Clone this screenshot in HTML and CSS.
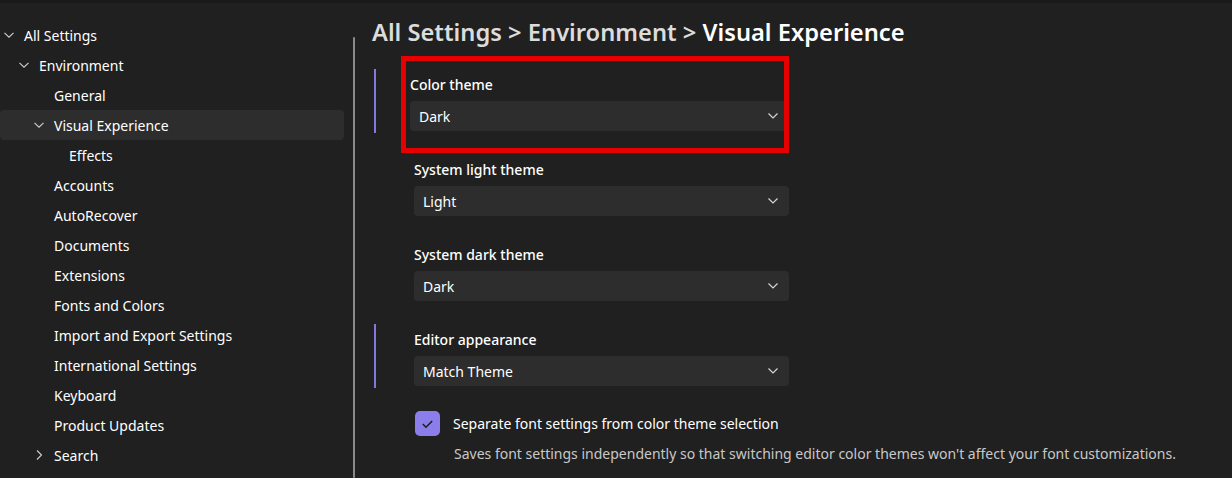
FILE: index.html
```html
<!DOCTYPE html>
<html lang="en">
<head>
  <meta charset="UTF-8">
  <meta name="viewport" content="width=device-width, initial-scale=1.0">
  <title>Options - Visual Experience</title>
  <link rel="stylesheet" href="styles.css">
</head>
<body>
  <div class="app">
    <nav class="tree">
      <div class="tree-row level-0">
        <span class="twisty"><svg viewBox="0 0 10 10"><path d="M0.5 2.8 L5 7.2 L9.5 2.8"/></svg></span>
        <span>All Settings</span>
      </div>
      <div class="tree-row level-1">
        <span class="twisty"><svg viewBox="0 0 10 10"><path d="M0.5 2.8 L5 7.2 L9.5 2.8"/></svg></span>
        <span>Environment</span>
      </div>
      <div class="tree-row level-2"><span class="twisty"></span><span>General</span></div>
      <div class="tree-row level-2 selected">
        <span class="twisty"><svg viewBox="0 0 10 10"><path d="M0.5 2.8 L5 7.2 L9.5 2.8"/></svg></span>
        <span>Visual Experience</span>
      </div>
      <div class="tree-row level-3"><span class="twisty"></span><span>Effects</span></div>
      <div class="tree-row level-2"><span class="twisty"></span><span>Accounts</span></div>
      <div class="tree-row level-2"><span class="twisty"></span><span>AutoRecover</span></div>
      <div class="tree-row level-2"><span class="twisty"></span><span>Documents</span></div>
      <div class="tree-row level-2"><span class="twisty"></span><span>Extensions</span></div>
      <div class="tree-row level-2"><span class="twisty"></span><span>Fonts and Colors</span></div>
      <div class="tree-row level-2"><span class="twisty"></span><span>Import and Export Settings</span></div>
      <div class="tree-row level-2"><span class="twisty"></span><span>International Settings</span></div>
      <div class="tree-row level-2"><span class="twisty"></span><span>Keyboard</span></div>
      <div class="tree-row level-2"><span class="twisty"></span><span>Product Updates</span></div>
      <div class="tree-row level-2">
        <span class="twisty"><svg viewBox="0 0 10 10"><path d="M3 0.5 L7.5 5 L3 9.5"/></svg></span>
        <span>Search</span>
      </div>
    </nav>
    <div class="scroll-thumb"></div>

    <main class="content">
      <h1 class="crumbs">
        <span class="crumb">All Settings</span> &gt; <span class="crumb">Environment</span> &gt; <span class="current">Visual Experience</span>
      </h1>

      <section class="setting accent callout-target">
        <div class="callout"></div>
        <label class="setting-label">Color theme</label>
        <div class="select"><span>Dark</span><svg viewBox="0 0 10 6"><path d="M0.5 0.5 L5 5 L9.5 0.5"/></svg></div>
      </section>

      <section class="setting">
        <label class="setting-label">System light theme</label>
        <div class="select"><span>Light</span><svg viewBox="0 0 10 6"><path d="M0.5 0.5 L5 5 L9.5 0.5"/></svg></div>
      </section>

      <section class="setting">
        <label class="setting-label">System dark theme</label>
        <div class="select"><span>Dark</span><svg viewBox="0 0 10 6"><path d="M0.5 0.5 L5 5 L9.5 0.5"/></svg></div>
      </section>

      <section class="setting accent">
        <label class="setting-label">Editor appearance</label>
        <div class="select"><span>Match Theme</span><svg viewBox="0 0 10 6"><path d="M0.5 0.5 L5 5 L9.5 0.5"/></svg></div>
      </section>

      <div class="check-row">
        <span class="checkbox"><svg viewBox="0 0 24 24"><path d="M7.5 12.5 L10.5 15.5 L16.5 9.5"/></svg></span>
        <span>Separate font settings from color theme selection</span>
      </div>
      <p class="check-desc">Saves font settings independently so that switching editor color themes won't affect your font customizations.</p>
    </main>
  </div>
</body>
</html>
```

FILE: styles.css
```css
body {
  margin: 0;
  padding: 0;
  background-color: #202020;
  color: #ffffff;
  font-family: "Noto Sans", "Open Sans", sans-serif;
  font-size: 14px;
  overflow: hidden;
}

.app {
  display: flex;
  height: 475px;
  border-top: 3px solid #1a1a1a;
}

/* left tree */
.tree {
  width: 344px;
  padding-top: 17px;
  flex-shrink: 0;
}

.tree-row {
  display: flex;
  align-items: center;
  height: 30px;
  border-radius: 4px;
  white-space: nowrap;
}

.tree-row.level-0 { padding-left: 0; }
.tree-row.level-1 { padding-left: 15px; }
.tree-row.level-2 { padding-left: 30px; }
.tree-row.level-3 { padding-left: 45px; }

.tree-row.selected {
  background-color: #2d2d2d;
}

.twisty {
  width: 24px;
  height: 10px;
  display: flex;
  flex-shrink: 0;
}

.twisty svg {
  width: 10px;
  height: 10px;
  margin-left: 4px;
  fill: none;
  stroke: #cfcfcf;
  stroke-width: 1.1;
}

.scroll-thumb {
  width: 2px;
  margin: 34px 0 0 9px;
  background-color: #8a8a8a;
  border-radius: 1px;
  flex-shrink: 0;
}

/* right pane */
.content {
  flex: 1;
  padding-left: 17px;
}

.crumbs {
  margin: 13px 0 0 0;
  font-size: 23.7px;
  font-weight: 600;
  line-height: 32px;
  color: #dcdcdc;
  white-space: nowrap;
}

.crumbs .current {
  color: #ffffff;
}

.setting {
  position: relative;
  width: 375px;
  margin: 21px 0 0 2px;
  padding: 0 0 2px 38px;
  border-left: 2px solid transparent;
}

.setting + .setting {
  margin-top: 21px;
}

.setting.accent {
  border-left-color: #8378de;
}

.setting.callout-target {
  padding-left: 34px;
  width: 379px;
}

.callout {
  position: absolute;
  left: 25px;
  top: -13px;
  width: 378px;
  height: 87px;
  border: 5px solid #e60000;
  pointer-events: none;
}

.setting-label {
  display: block;
  line-height: 32px;
  font-weight: 500;
}

.select {
  display: flex;
  align-items: center;
  justify-content: space-between;
  height: 30px;
  padding: 0 11px 0 9px;
  background-color: #2d2d2d;
  border-radius: 4px;
}

.select svg {
  width: 10px;
  height: 6px;
  fill: none;
  stroke: #d6d6d6;
  stroke-width: 1.2;
}

.check-row {
  display: flex;
  align-items: center;
  gap: 13px;
  margin: 23px 0 0 43px;
}

.checkbox {
  width: 25px;
  height: 25px;
  border-radius: 5px;
  background-color: #8b7eea;
  display: flex;
}

.checkbox svg {
  width: 25px;
  height: 25px;
  fill: none;
  stroke: #1c1c1c;
  stroke-width: 1.4;
}

.check-desc {
  margin: 8px 0 0 82px;
  color: #c8c8c8;
  line-height: 20px;
  white-space: nowrap;
}
```
